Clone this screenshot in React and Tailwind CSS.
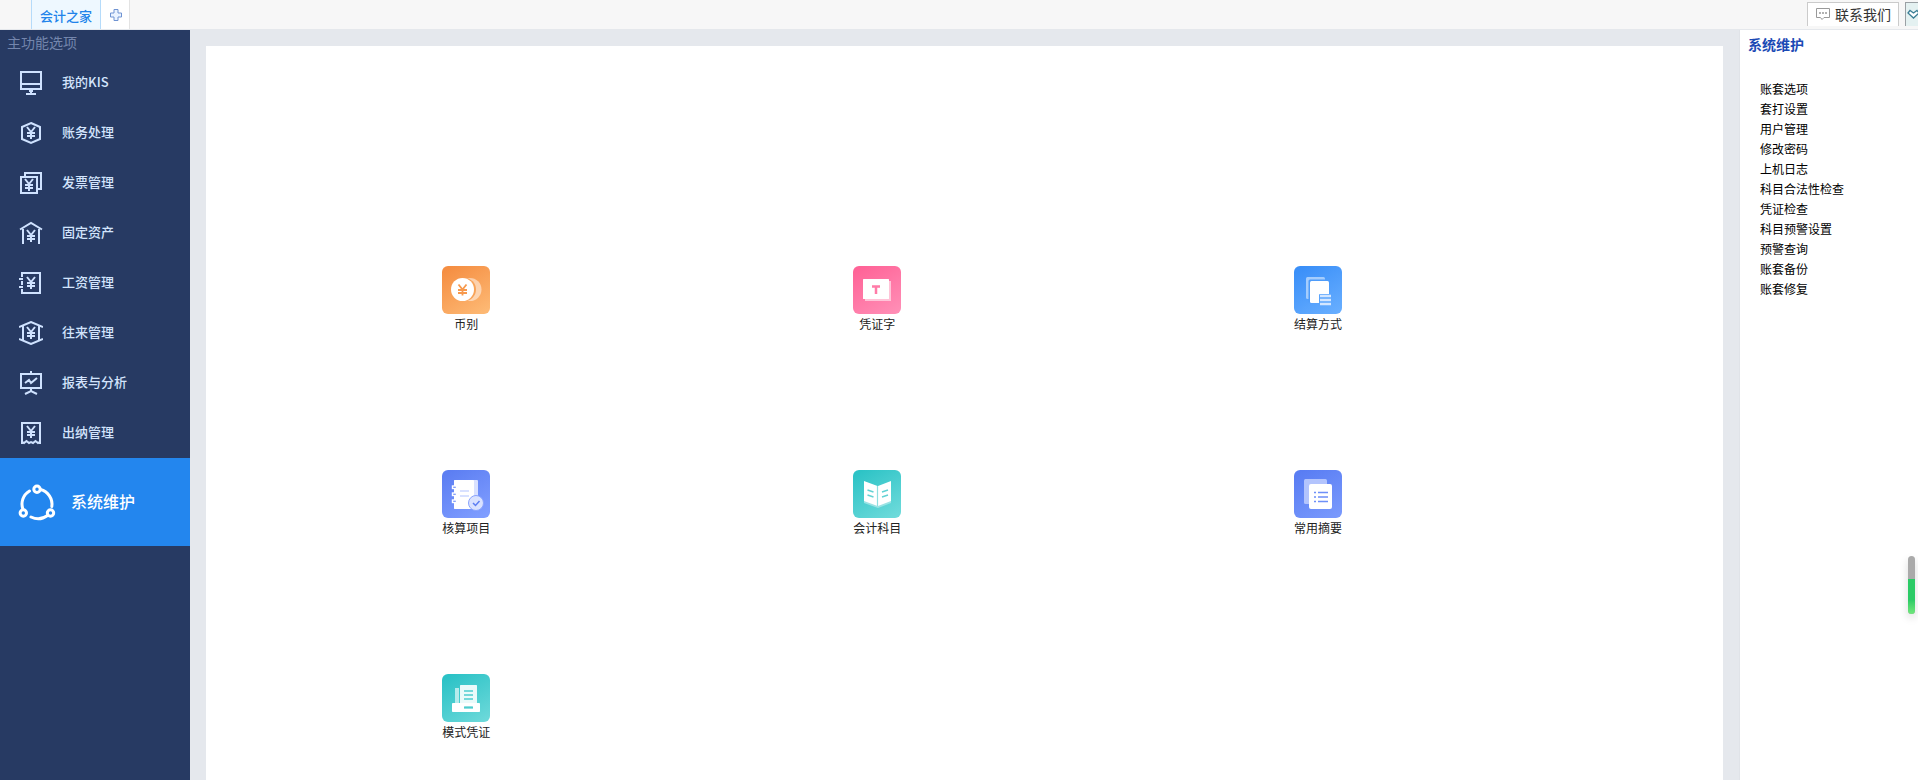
import { useState } from "react";
import clsx from "clsx";

const YEN = "M8 6l4 5 4-5M12 11v7M8 12h8M8 15h8";

function LineIcon({ children }) {
  return (
    <svg
      className="size-6 shrink-0"
      viewBox="0 0 24 24"
      fill="none"
      stroke="#cfe2ff"
      strokeWidth="2"
      aria-hidden="true"
    >
      {children}
    </svg>
  );
}

const menu = [
  {
    name: "我的KIS",
    icon: <path d="M2 1h20v17H2zM2 13h20M10 20h4M12 19v4M7 23h10" />,
  },
  {
    name: "账务处理",
    icon: (
      <>
        <path d="M12 2l9 4v12l-9 4-9-4V6z" />
        <path d={YEN} />
      </>
    ),
  },
  {
    name: "发票管理",
    icon: (
      <>
        <path d="M2 6h16v16H2zM6 5V2h16v16h-3" />
        <path d={YEN} transform="translate(-2 2)" />
      </>
    ),
  },
  {
    name: "固定资产",
    icon: (
      <>
        <path d="M1 8.500l11-6.500 11 6.500M4 8v15M20 8v15" />
        <path d={YEN} transform="translate(0 3)" />
      </>
    ),
  },
  {
    name: "工资管理",
    icon: (
      <>
        <path d="M3 6V2h18v20H3v-4M3 10v4M0 8h4M0 16h4" />
        <path d={YEN} />
      </>
    ),
  },
  {
    name: "往来管理",
    icon: (
      <>
        <path d="M0 6l12-5 12 5M0 18l12 5 12-5M4 5v14M20 5v14" />
        <path d={YEN} />
      </>
    ),
  },
  {
    name: "报表与分析",
    icon: <path d="M12 0v3M2 3h20v14H2zM6 12l4-3 2 3 6-5M12 17v3M6 23l6-3 6 3" />,
  },
  {
    name: "出纳管理",
    icon: (
      <>
        <path d="M3 23V2h18v21M3 21l2 1 2.500-2 2.500 2 2-1 2 1 2.500-2 2.500 2 2-1" />
        <path d={YEN} transform="translate(0 -1)" />
      </>
    ),
  },
  {
    name: "系统维护",
    icon: (
      <svg
        className="size-[38px] shrink-0"
        viewBox="0 0 38 38"
        fill="none"
        stroke="#fff"
        strokeWidth="3"
        aria-hidden="true"
      >
        <circle cx="19" cy="6.300" r="3.200" />
        <circle cx="5.300" cy="30" r="3.200" />
        <circle cx="32.500" cy="30" r="3.200" />
        <g strokeLinecap="round">
          <path d="M5 26.500A15.200 15.200 0 0 1 11.500 8" />
          <path d="M22.500 6.500A15.200 15.200 0 0 1 33.800 23.500" />
          <path d="M13 34A16 16 0 0 0 29.500 32.500" />
        </g>
      </svg>
    ),
  },
];

function Tile({ id, from, to, children }) {
  return (
    <svg className="size-12" viewBox="0 0 48 48" aria-hidden="true">
      <defs>
        <linearGradient id={id} x1="0.2" y1="0" x2="0.8" y2="1">
          <stop offset="0" stopColor={from} />
          <stop offset="1" stopColor={to} />
        </linearGradient>
      </defs>
      <rect width="48" height="48" rx="6" fill={`url(#${id})`} />
      {children}
    </svg>
  );
}

const tools = [
  {
    name: "币别",
    icon: (
      <Tile id="currency" from="#f58e42" to="#fdb873">
        <circle cx="28" cy="23.500" r="11.500" fill="#fff" opacity="0.5" />
        <circle cx="22.500" cy="23.500" r="11.500" fill="#f8a358" />
        <circle cx="20.500" cy="23.500" r="11.500" fill="#fff" />
        <path
          d="M16.500 18.500l4 5 4-5M20.500 23v6.500M16 24h9M16 27h9"
          fill="none"
          stroke="#f7994d"
          strokeWidth="1.800"
        />
      </Tile>
    ),
  },
  {
    name: "凭证字",
    icon: (
      <Tile id="word" from="#ff6397" to="#ff8db5">
        <rect x="12" y="15" width="26" height="20" fill="#ffc4d8" />
        <rect x="10" y="13" width="26" height="20" rx="0.500" fill="#fff" />
        <path d="M19 20.500h8M23 20v8" fill="none" stroke="#ff7ba8" strokeWidth="2.500" />
      </Tile>
    ),
  },
  {
    name: "结算方式",
    icon: (
      <Tile id="settle" from="#3a8ff8" to="#66adff">
        <rect x="12" y="11" width="19" height="22" rx="1.500" fill="#a5cdfd" />
        <rect x="14.500" y="13.500" width="21" height="23" rx="1.500" fill="#4e9cfa" />
        <rect x="16" y="15" width="19" height="22" rx="1.500" fill="#fff" />
        <rect x="25" y="28" width="12" height="11" rx="1" fill="#5aa4fc" />
        <path d="M26 30h11M26 34h11M26 38h11" stroke="#d3e6ff" strokeWidth="2.500" />
      </Tile>
    ),
  },
  {
    name: "核算项目",
    icon: (
      <Tile id="project" from="#5c7ef2" to="#7f9dff">
        <rect x="12" y="10" width="24" height="29" rx="1" fill="#d9e1ff" />
        <rect x="12" y="10" width="20" height="29" rx="1" fill="#fff" />
        <path d="M18 21h9M18 26h9" stroke="#ccd7ff" strokeWidth="1.600" />
        <g fill="#6a8af7" stroke="#fff" strokeWidth="1.400">
          <rect x="10.500" y="16" width="4" height="2.500" />
          <rect x="10.500" y="23" width="4" height="2.500" />
          <rect x="10.500" y="30" width="4" height="2.500" />
        </g>
        <circle cx="34" cy="33" r="7.500" fill="#d9e2ff" stroke="#89a3fd" />
        <path d="M31 33l2.500 2.500 4-4.500" fill="none" stroke="#5c7ef2" strokeWidth="1.500" />
      </Tile>
    ),
  },
  {
    name: "会计科目",
    icon: (
      <Tile id="subject" from="#2dc3c6" to="#6cdada">
        <path d="M11 33l14 5 13-5v-3H11z" fill="#9be3e4" />
        <path d="M11 11l13.500 5v20L11 31zM38 11l-13 5v20l13-5z" fill="#fff" />
        <path d="M24.500 16v20" stroke="#8fdfe0" strokeWidth="1.200" />
        <path
          d="M14.500 20l6 2M14.500 25l6 2M35 20l-6 2M35 25l-6 2"
          stroke="#63d2d4"
          strokeWidth="1.500"
        />
      </Tile>
    ),
  },
  {
    name: "常用摘要",
    icon: (
      <Tile id="summary" from="#597df3" to="#7898fc">
        <rect x="10" y="9" width="23" height="25" rx="1.500" fill="#b3c4fd" />
        <rect x="15" y="14" width="23" height="25" rx="2" fill="#fff" />
        <path d="M20 22.500h2M20 27h2M20 31.500h2M24 22.500h10M24 27h10M24 31.500h10" stroke="#6e8ff8" strokeWidth="1.600" />
      </Tile>
    ),
  },
  {
    name: "模式凭证",
    icon: (
      <Tile id="template" from="#2bc2c6" to="#6ad8d9">
        <path d="M13 14h4v16h-4z" fill="#b5ebec" />
        <rect x="18" y="11" width="17" height="20" rx="0.500" fill="#eafafa" />
        <path d="M22 17h9M22 21h9M22 25h9" stroke="#4ecdcf" strokeWidth="1.600" />
        <rect x="10" y="29" width="28" height="9" rx="0.800" fill="#fff" />
        <rect x="22" y="32" width="9" height="3" rx="0.500" fill="#8fdfe0" />
        <path d="M22 33.500h9" stroke="#4ecdcf" />
      </Tile>
    ),
  },
];

const links = [
  "账套选项",
  "套打设置",
  "用户管理",
  "修改密码",
  "上机日志",
  "科目合法性检查",
  "凭证检查",
  "科目预警设置",
  "预警查询",
  "账套备份",
  "账套修复",
];

function TopBar() {
  return (
    <header className="flex h-[30px] shrink-0 justify-between border-b border-[#e5e8ec] bg-[#f7f7f7]">
      <div className="flex pl-[31px]">
        <button className="border-x border-[#b5dbfa] bg-[#eef8ff] px-2 pt-0.5 text-[13px] font-medium text-[#2183ea]">
          会计之家
        </button>
        <button
          aria-label="新建标签"
          className="flex w-[29px] items-center justify-center border-r border-[#e3e3e3] bg-white pl-0.5"
        >
          <svg className="size-3" viewBox="0 0 12 12" fill="#eaf3ff" stroke="#6f93d2">
            <path d="M4 .5h4V4h3.500v4H8v3.500H4V8H.5V4H4z" />
          </svg>
        </button>
      </div>
      <div className="flex items-start gap-1.5 pt-0.5">
        <button className="flex h-6 items-center gap-1 border border-b-0 border-[#cbcbcb] bg-white px-[7px] pb-0.5 text-sm text-[#333]">
          <svg className="size-4" viewBox="0 0 16 16" fill="none" stroke="#999">
            <path d="M1.500 2.500h13v9H9l-2 2-1.500-2h-4z" />
            <path d="M4 7h2M7 7h2M10 7h2" strokeWidth="1.500" />
          </svg>
          联系我们
        </button>
        <button
          aria-label="更多"
          className="flex h-6 w-[13px] items-center overflow-hidden border-l border-t border-[#9aa0a4] bg-[#e4f1f1] pl-px"
        >
          <svg className="h-3 w-4 shrink-0" viewBox="0 0 16 12" fill="#fff" stroke="#3c7f96" strokeWidth="1.300">
            <path d="M1 4l2-2.500 3.500 2.500L10 1.500 12 4 6.500 9z" />
          </svg>
        </button>
      </div>
    </header>
  );
}

export default function App() {
  const [active, setActive] = useState("系统维护");

  return (
    <div className="flex min-h-screen flex-col bg-[#e5e8ed] font-['Noto_Sans_CJK_SC',sans-serif]">
      <TopBar />
      <div className="flex flex-1">
        {/* Left menu */}
        <nav className="w-[190px] shrink-0 bg-[#273a63]">
          <h2 className="h-7 pt-0.5 pl-[7px] text-sm leading-5 text-[#7486ad]">主功能选项</h2>
          {menu.map((item) => (
            <button
              key={item.name}
              onClick={() => setActive(item.name)}
              className={clsx(
                "flex w-full items-center",
                item.name === active
                  ? "h-[88px] gap-[15px] bg-[#2386ee] pl-[18px] text-base font-medium text-white"
                  : "h-[50px] gap-[19px] pl-[19px] text-[13px] font-medium text-[#d3e4fc]"
              )}
            >
              {item.name === "系统维护" ? item.icon : <LineIcon>{item.icon}</LineIcon>}
              <span className="pb-0.5">{item.name}</span>
            </button>
          ))}
        </nav>

        {/* Workspace */}
        <main className="mx-4 mt-4 grid flex-1 grid-cols-[411fr_441fr_437fr] content-start gap-y-[136px] bg-white pt-[220px] pl-[11.9%]">
          {tools.map((tool) => (
            <button
              key={tool.name}
              className="flex w-16 flex-col items-center text-xs leading-5 text-[#222]"
            >
              {tool.icon}
              {tool.name}
            </button>
          ))}
        </main>

        {/* Related functions */}
        <aside className="w-[179px] shrink-0 border-l border-[#e0e3e8] bg-white">
          <h2 className="pt-1 pl-2 text-sm leading-5 font-bold text-[#1b49b5]">系统维护</h2>
          <ul className="pt-[25px] pl-5 text-xs leading-5 text-black">
            {links.map((link) => (
              <li key={link}>
                <a href="#">{link}</a>
              </li>
            ))}
          </ul>
        </aside>
      </div>

      {/* Floating level meter */}
      <div className="fixed top-[556px] right-[3px] flex h-[58px] w-[7px] flex-col overflow-hidden rounded-full bg-[#aaa] shadow-[0_4px_8px_rgba(0,0,0,0.15)]">
        <div className="mt-[23px] flex-1 bg-linear-to-b from-[#2bcb66] from-60% to-[#6fe87c]" />
      </div>
    </div>
  );
}
